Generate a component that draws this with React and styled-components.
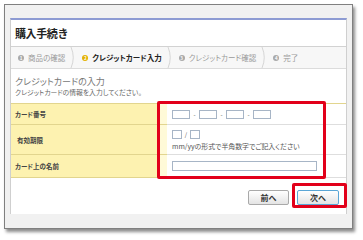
import React from 'react';
import styled, { createGlobalStyle } from 'styled-components';

const Global = createGlobalStyle`
  html, body { margin: 0; padding: 0; background: #fff; }
  body { font-family: "Noto Sans CJK JP", "Noto Sans", sans-serif; }
  #root { width: 363px; height: 240px; overflow: hidden; }
`;

const Frame = styled.div`
  position: relative;
  box-sizing: border-box;
  margin: 4px 0 0 4px;
  width: 349px;
  height: 225px;
  border: 1px solid #808080;
  background: #f1f1f1;
  box-shadow: 2px 3px 3px rgba(0, 0, 0, 0.45);
  padding: 13px 5px 14px 5px;
  display: flex;
`;

const Panel = styled.div`
  flex: 1;
  display: flex;
  flex-direction: column;
  background: #fff;
  border-left: 1px solid #cfcfcf;
  border-right: 1px solid #cfcfcf;
  border-top: 2px solid #8d9bd3;
`;

const TitleBar = styled.div`
  height: 26px;
  display: flex;
  align-items: center;
  padding-left: 4px;
  border-bottom: 1px solid #d2d2d2;
`;

const Title = styled.h1`
  margin: 0;
  font-size: 11px;
  font-weight: 700;
  color: #222;
  letter-spacing: -0.4px;
`;

const Steps = styled.div`
  height: 21px;
  display: flex;
  align-items: center;
  padding-left: 7px;
  background: #f7f7f7;
  border-bottom: 1px solid #dcdcdc;
`;

const Step = styled.div`
  display: flex;
  align-items: center;
  gap: 4px;
  font-size: 7.5px;
  font-feature-settings: "palt";
  font-weight: ${(p) => (p.$active ? 700 : 400)};
  color: ${(p) => (p.$active ? '#222' : '#9a9a9a')};
  white-space: nowrap;
`;

const Num = styled.span`
  width: 6px;
  height: 6px;
  border-radius: 50%;
  background: ${(p) => (p.$active ? '#e3b100' : '#a9a9a9')};
  color: #fff;
  font-size: 4.5px;
  font-weight: 700;
  line-height: 6px;
  text-align: center;
`;

const Chevron = styled.svg`
  width: 5px;
  height: 21px;
  margin: 0 7px 0 5px;
  flex: none;
`;

const Section = styled.div`
  padding: 7px 0 0 4px;
`;

const Heading = styled.h2`
  margin: 0;
  font-size: 9px;
  line-height: 12px;
  font-weight: 400;
  color: #777;
  font-feature-settings: "palt";
`;

const Lead = styled.p`
  margin: 0;
  font-size: 6.8px;
  line-height: 9px;
  color: #666;
  font-feature-settings: "palt";
`;

const Table = styled.div`
  margin-top: 6px;
  display: grid;
  grid-template-columns: 147px 9px 1fr;
  border-top: 1px solid #e2d58e;
`;

const Label = styled.div`
  height: ${(p) => p.$h}px;
  box-sizing: border-box;
  display: flex;
  align-items: center;
  padding-left: ${(p) => p.$indent || 4}px;
  background: #fdf2b0;
  border-bottom: 1px solid #e2d58e;
  font-size: 6.5px;
  font-weight: 700;
  color: #444;
  font-feature-settings: "palt";
`;

const Strip = styled.div`
  height: ${(p) => p.$h}px;
  box-sizing: border-box;
  background: #fffad8;
  border-bottom: 1px solid #e2d58e;
`;

const Field = styled.div`
  height: ${(p) => p.$h}px;
  box-sizing: border-box;
  display: flex;
  flex-direction: column;
  justify-content: ${(p) => (p.$top ? 'flex-start' : 'center')};
  padding: ${(p) => (p.$top ? '5px 0 0 5px' : '0 0 0 5px')};
  border-bottom: 1px solid #dedede;
`;

const Line = styled.div`
  display: flex;
  align-items: center;
`;

const Box = styled.div`
  box-sizing: border-box;
  width: ${(p) => p.$w}px;
  height: ${(p) => p.$hh || 9}px;
  border: 1px solid #a7b5c6;
  background: #fff;
`;

const Sep = styled.span`
  width: ${(p) => p.$w}px;
  text-align: center;
  font-size: 6px;
  line-height: 9px;
  color: #555;
`;

const Hint = styled.div`
  margin-top: 3px;
  font-size: 6.9px;
  line-height: 8px;
  color: #555;
  font-feature-settings: "palt";
  white-space: nowrap;
`;

const Actions = styled.div`
  margin-top: 12px;
  display: flex;
  justify-content: flex-end;
  gap: 8px;
  padding-right: 7px;
`;

const Button = styled.button`
  box-sizing: border-box;
  width: ${(p) => p.$w}px;
  height: 15px;
  padding: 0;
  border: 1px solid ${(p) => (p.$focus ? '#5aa6d6' : '#a9a9a9')};
  border-radius: 2px;
  background: linear-gradient(#ffffff, #e4e4e4);
  font-family: "Noto Sans CJK JP", sans-serif;
  font-size: 8px;
  font-weight: 700;
  color: #333;
  line-height: 13px;
`;

const Mark = styled.div`
  position: absolute;
  box-sizing: border-box;
  left: ${(p) => p.$x}px;
  top: ${(p) => p.$y}px;
  width: ${(p) => p.$w}px;
  height: ${(p) => p.$h}px;
  border: 3px solid #e2001a;
  border-radius: 2px;
  pointer-events: none;
`;

const Arrow = () => (
  <Chevron viewBox="0 0 5 21">
    <path d="M1 0 Q5.5 10.5 1 21" fill="none" stroke="#cdcdcd" strokeWidth="0.8" />
  </Chevron>
);

const steps = ['商品の確認', 'クレジットカード入力', 'クレジットカード確認', '完了'];

export default function App() {
  return (
    <>
      <Global />
      <Frame>
        <Panel>
          <TitleBar>
            <Title>購入手続き</Title>
          </TitleBar>
          <Steps>
            {steps.map((s, i) => (
              <React.Fragment key={s}>
                <Step $active={i === 1}>
                  <Num $active={i === 1}>{i + 1}</Num>
                  {s}
                </Step>
                {i < steps.length - 1 && <Arrow />}
              </React.Fragment>
            ))}
          </Steps>
          <Section>
            <Heading>クレジットカードの入力</Heading>
            <Lead>クレジットカードの情報を入力してください。</Lead>
          </Section>
          <Table>
            <Label $h={21}>カード番号</Label>
            <Strip $h={21} />
            <Field $h={21}>
              <Line>
                <Box $w={18} />
                <Sep $w={9}>-</Sep>
                <Box $w={18} />
                <Sep $w={9}>-</Sep>
                <Box $w={18} />
                <Sep $w={9}>-</Sep>
                <Box $w={18} />
              </Line>
            </Field>
            <Label $h={30} $indent={6}>有効期限</Label>
            <Strip $h={30} />
            <Field $h={30} $top>
              <Line>
                <Box $w={10} />
                <Sep $w={8}>/</Sep>
                <Box $w={10} />
              </Line>
              <Hint>mm/yyの形式で半角数字でご記入ください</Hint>
            </Field>
            <Label $h={23}>カード上の名前</Label>
            <Strip $h={23} />
            <Field $h={23}>
              <Line>
                <Box $w={145} $hh={10} />
              </Line>
            </Field>
          </Table>
          <Actions>
            <Button $w={41}>前へ</Button>
            <Button $w={42} $focus>次へ</Button>
          </Actions>
        </Panel>
        <Mark $x={152} $y={96} $w={169} $h={78} />
        <Mark $x={287} $y={178} $w={55} $h={25} />
      </Frame>
    </>
  );
}
